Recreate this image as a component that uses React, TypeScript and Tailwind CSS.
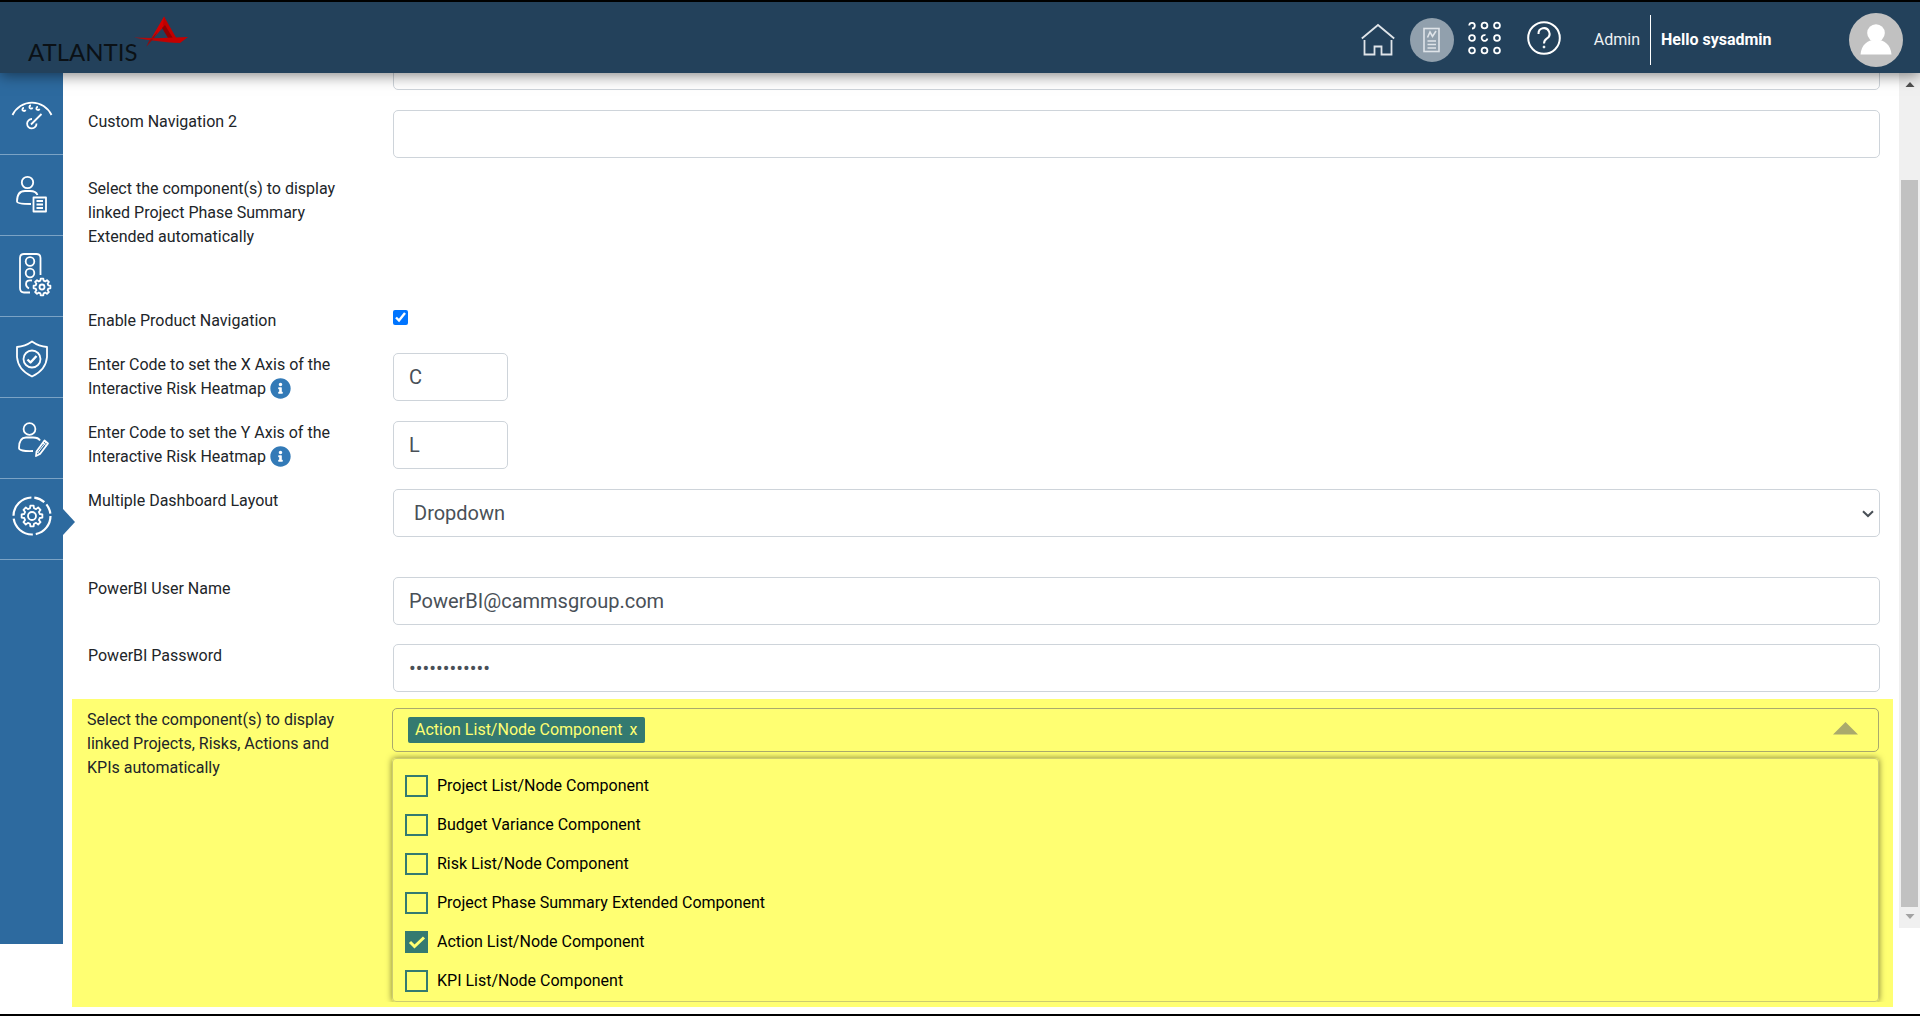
import { useState } from "react";
import type { ReactNode } from "react";
import { FaInfoCircle } from "react-icons/fa";

const COMPONENTS = [
  "Project List/Node Component",
  "Budget Variance Component",
  "Risk List/Node Component",
  "Project Phase Summary Extended Component",
  "Action List/Node Component",
  "KPI List/Node Component",
];

const inputClass =
  "block h-12 rounded-[5px] border border-[#ced4da] bg-white px-[15px] text-xl text-[#495057] focus:outline-none";

// Outline of a cog with the given number of teeth
function gearPath(cx: number, cy: number, outer: number, inner: number, teeth: number) {
  const points: string[] = [];
  const step = (Math.PI * 2) / teeth;
  for (let i = 0; i < teeth; i++) {
    const a = i * step - Math.PI / 2;
    const corners = [
      [inner, -0.32],
      [outer, -0.2],
      [outer, 0.2],
      [inner, 0.32],
    ];
    corners.forEach(([r, offset]) => {
      const angle = a + offset * step;
      points.push(`${(cx + r * Math.cos(angle)).toFixed(2)} ${(cy + r * Math.sin(angle)).toFixed(2)}`);
    });
  }
  return `M${points.join("L")}Z`;
}

function Logo() {
  return (
    <a href="#" className="flex items-start pl-7" aria-label="Atlantis">
      <span className="pt-9 font-[Lato] text-2xl leading-7 text-[#0b1116]">ATLANTIS</span>
      <svg width="56" height="32" viewBox="0 0 56 32" className="mt-3.5 -ml-1">
        <path d="M0 21.5L17 22L40 25.500L46 27L35 26.500L14 24Z" fill="#b30a0a" />
        <path d="M30 0.500L33 7L16 26L12.500 30.500Z" fill="#d40000" />
        <path d="M30 0.500L44 25L46 27L38 24L29 9Z" fill="#c00000" />
        <path d="M31 9L40 24L34 22L28 12Z" fill="#8f0000" />
        <path d="M15 25L24 15L20 22L12.500 30.500Z" fill="#8a0d12" />
        <path d="M15 22.500L54 21L46 27L33 25.500Z" fill="#c40000" />
      </svg>
    </a>
  );
}

function Header() {
  return (
    <header className="relative z-20 flex h-[71px] shrink-0 justify-between bg-[#23415b] pr-[17px] text-base text-white shadow-[0_2px_14px_rgba(0,0,0,0.5)]">
      <Logo />
      <div className="flex items-center pt-1">
        <button type="button" aria-label="Home" className="mr-[15px]">
          <svg width="34" height="34" viewBox="0 0 34 34" fill="none" stroke="#dfe4e9" strokeWidth="1.800">
            <path d="M0.800 15.500L17 2L33.200 15.500" />
            <path d="M3.500 17V31.500H13.500V23.500H20.500V31.500H30.500V17" />
          </svg>
        </button>
        <button
          type="button"
          aria-label="Reports"
          className="mr-3.5 flex size-11 items-center justify-center rounded-full bg-[#91a0ad]"
        >
          <svg width="18" height="26" viewBox="0 0 18 26" fill="none" stroke="#dfe4e9" strokeWidth="1.600">
            <rect x="1" y="1.500" width="15" height="23" />
            <path d="M4.500 10.500L7 5L9.500 9.500L13 4M4.500 14H13M4.500 17.500H13M4.500 21H13" />
          </svg>
        </button>
        <button type="button" aria-label="Products" className="mr-[25px]">
          <svg width="34" height="44" viewBox="0 0 34 44" fill="none" stroke="#fff" strokeWidth="1.800">
            <path d="M1.200 7.500A2.800 2.800 0 1 1 4 10.500" />
            <circle cx="16.500" cy="7.500" r="2.900" />
            <circle cx="29" cy="7.500" r="2.900" />
            <circle cx="4" cy="20" r="2.900" />
            <path d="M17.500 17.200A2.900 2.900 0 1 0 19.400 20.500" />
            <circle cx="29" cy="20" r="2.900" />
            <circle cx="4" cy="32.500" r="2.900" />
            <circle cx="16.500" cy="32.500" r="2.900" />
            <circle cx="29" cy="32.500" r="2.900" />
          </svg>
        </button>
        <button type="button" aria-label="Help" className="mr-[33px]">
          <svg width="34" height="38" viewBox="0 0 34 38" fill="none" stroke="#fff" strokeWidth="2">
            <circle cx="17" cy="17" r="15.800" />
            <path d="M11.500 13A5.500 5.500 0 1 1 20 17.300Q17 19.200 17 22.500" />
            <circle cx="17" cy="26" r="1" fill="#fff" strokeWidth="0.800" />
          </svg>
        </button>
        <a href="#" className="text-[#eef1f4]">Admin</a>
        <div className="mr-2.5 ml-2.5 h-[50px] w-px bg-white" />
        <span className="w-[188px] font-bold">Hello sysadmin</span>
        <button type="button" aria-label="Profile">
          <svg width="54" height="54" viewBox="0 0 54 54">
            <circle cx="27" cy="27" r="27" fill="#c1c1c1" />
            <circle cx="27" cy="20" r="8.800" fill="#fff" />
            <path d="M11.500 41.500C12 32 19 26.500 27 26.500S42 32 42.500 41.500Z" fill="#fff" />
          </svg>
        </button>
      </div>
    </header>
  );
}

const NAV_ITEMS: { label: string; icon: ReactNode }[] = [
  {
    label: "Dashboard",
    icon: (
      <>
        <path d="M12.500 41A21.500 21.500 0 0 1 51.500 41" />
        <path d="M24 33.800A1.600 1.600 0 1 0 25.500 35.800M31 31.500A1.600 1.600 0 1 0 32.500 33.500M38 32.800A1.600 1.600 0 1 0 39.500 34.800" />
        <path d="M32 45A4.700 4.700 0 1 0 36.500 49.500M31 50.500L41.500 40" />
      </>
    ),
  },
  {
    label: "My Reports",
    icon: (
      <>
        <circle cx="27.500" cy="27.500" r="5.700" />
        <path d="M31 49Q17 49 17 46.500Q17 36 25 36H30Q36 36 37.500 40" />
        <rect x="33.500" y="42.500" width="12.500" height="14" />
        <path d="M36.500 46H43M36.500 49.500H43M36.500 53H43" />
      </>
    ),
  },
  {
    label: "Status Settings",
    icon: (
      <>
        <path d="M40.500 39V22Q40.500 18 36.500 18H24Q20 18 20 22V52Q20 56.500 24 56.500H30" />
        <circle cx="30" cy="25.500" r="4.300" />
        <circle cx="30" cy="37" r="4.300" />
        <path d="M32 44.500Q26 43.500 26 48Q26 51 29 52.500" />
        <path d={gearPath(42, 51, 8.5, 6.5, 8)} />
        <circle cx="42" cy="51" r="2.500" />
      </>
    ),
  },
  {
    label: "Risk",
    icon: (
      <>
        <path d="M32 24.500Q25 29.500 17 30V40Q18 53 32 59.500Q46 53 47 40V30Q39 29.500 32 24.500Z" />
        <circle cx="32" cy="42" r="8.500" />
        <path d="M27.500 42.500L30.500 45.500L36.500 39" strokeWidth="2.400" />
      </>
    ),
  },
  {
    label: "Users",
    icon: (
      <>
        <circle cx="29.500" cy="31" r="5.900" />
        <path d="M33 53Q19 53.500 19 50Q19 39.500 26 39.500H33Q38.500 39.500 40 42.500" />
        <path d="M44.500 42.500L48 45.500L40 56L36 58L36.500 53.500Z" />
        <path d="M46 44L38 54.500M43 45L46.500 48M36.500 53.500L40 56" strokeWidth="1" />
      </>
    ),
  },
  {
    label: "Configuration",
    icon: (
      <>
        <circle cx="32" cy="37" r="18.500" strokeWidth="2.200" strokeDasharray="25 3 27 3 28 3 11 3 10 3.200" />
        <path d={gearPath(32, 37, 10.5, 8, 8)} />
        <circle cx="32" cy="37" r="4" />
      </>
    ),
  },
];

function Sidebar() {
  return (
    <nav className="relative z-10 mb-[70px] w-[63px] shrink-0 bg-[#2d6a9f] pt-px">
      {NAV_ITEMS.map((item) => (
        <a
          key={item.label}
          href="#"
          aria-label={item.label}
          className="relative block h-[81px] border-b border-[#7ba3c5]"
        >
          <svg
            width="63"
            height="80"
            viewBox="0 0 63 80"
            fill="none"
            stroke="#fff"
            strokeWidth="1.800"
            strokeLinejoin="round"
          >
            {item.icon}
          </svg>
          {item.label === "Configuration" && (
            <svg width="12" height="26" viewBox="0 0 12 26" className="absolute top-[30px] left-full">
              <path d="M0 0L12 13L0 26Z" fill="#2d6a9f" />
            </svg>
          )}
        </a>
      ))}
    </nav>
  );
}

interface RowProps {
  label: string;
  id?: string;
  info?: boolean;
  className?: string;
  children?: ReactNode;
}

function Row({ label, id, info, className = "pb-5", children }: RowProps) {
  return (
    <div className={`flex items-start ${className}`}>
      <label htmlFor={id} className="w-[305px] shrink-0 pr-11 leading-6">
        {label}
        {info && <FaInfoCircle className="-mt-0.5 ml-1 inline size-[21px] text-[#337ab7]" />}
      </label>
      <div className="min-w-0 flex-1">{children}</div>
    </div>
  );
}

function ComponentPicker() {
  const [selected, setSelected] = useState<string[]>(["Action List/Node Component"]);

  const toggle = (name: string) => {
    setSelected((prev) => (prev.includes(name) ? prev.filter((n) => n !== name) : [...prev, name]));
  };

  return (
    <>
      <div className="flex h-11 items-center justify-between rounded-[5px] border border-[#aaaa6c] pr-5 pl-[15px]">
        <div className="flex gap-2">
          {selected.map((name) => (
            <span
              key={name}
              className="flex h-[26px] items-center gap-[7px] rounded-[2px] bg-[#347a70] px-[7px] text-[#ffff72]"
            >
              {name}
              <button type="button" aria-label={`Remove ${name}`} onClick={() => toggle(name)}>
                x
              </button>
            </span>
          ))}
        </div>
        <button type="button" aria-label="Close list" className="pb-1">
          <svg width="25" height="13" viewBox="0 0 25 13" className="block">
            <path d="M12.500 0L25 12.500H0Z" fill="#aaaa6c" />
          </svg>
        </button>
      </div>

      <div className="mt-1.5 rounded-[4px] border border-[#cccc70] pt-[7px] pb-px pl-3 shadow-[0_0_6px_rgba(0,0,0,0.5)] [clip-path:inset(-8px_-8px_0_-8px)]">
        {COMPONENTS.map((name) => (
          <label key={name} className="flex h-[39px] items-center gap-[9px] text-black">
            <span className="relative">
              <input
                type="checkbox"
                checked={selected.includes(name)}
                onChange={() => toggle(name)}
                className="block h-[22px] w-[23px] appearance-none border-2 border-[#347a70] checked:bg-[#347a70]"
              />
              {selected.includes(name) && (
                <svg width="23" height="22" viewBox="0 0 23 22" className="pointer-events-none absolute inset-0">
                  <path d="M5 11L9.500 15.500L19 6.500" fill="none" stroke="#ffff72" strokeWidth="3" />
                </svg>
              )}
            </span>
            {name}
          </label>
        ))}
      </div>
    </>
  );
}

function Scrollbar() {
  return (
    <div className="mb-[86px] flex w-[21px] shrink-0 flex-col items-center bg-[#f0f0f0] pb-[21px]">
      <svg width="10" height="107" viewBox="0 0 10 107" className="shrink-0">
        <path d="M0.500 14L5 9L9.500 14Z" fill="#505050" />
      </svg>
      <div className="relative w-[17px] flex-1 bg-[#c1c1c1]">
        <svg width="10" height="5" viewBox="0 0 10 5" className="absolute top-full left-1 mt-[7px]">
          <path d="M0.500 0H9.500L5 5Z" fill="#a3a3a3" />
        </svg>
      </div>
    </div>
  );
}

export default function App() {
  const [xAxis, setXAxis] = useState("C");
  const [yAxis, setYAxis] = useState("L");
  const [userName, setUserName] = useState("PowerBI@cammsgroup.com");
  const [password, setPassword] = useState("abcdefghijkl");

  return (
    <div className="flex h-screen flex-col overflow-hidden border-y-2 border-black bg-white font-[Roboto,sans-serif] text-base text-[#212529]">
      <Header />
      <div className="flex min-h-0 flex-1">
        <Sidebar />

        <main className="min-w-0 flex-1 overflow-hidden pr-[19px] pl-[25px]">
          {/* Row scrolled under the header */}
          <div className="-mt-[31px] pb-5 pl-[305px]">
            <input type="text" aria-label="Custom Navigation 1" className={`${inputClass} w-full`} />
          </div>

          <Row label="Custom Navigation 2" id="nav2" className="pb-[19px]">
            <input id="nav2" type="text" className={`${inputClass} w-full`} />
          </Row>
          <Row
            label="Select the component(s) to display linked Project Phase Summary Extended automatically"
            className="pb-[60px]"
          />
          <Row label="Enable Product Navigation" id="productNav">
            <input id="productNav" type="checkbox" defaultChecked className="mt-px block size-[15px]" />
          </Row>
          <Row label="Enter Code to set the X Axis of the Interactive Risk Heatmap" id="xAxis" info>
            <input
              id="xAxis"
              type="text"
              value={xAxis}
              onChange={(e) => setXAxis(e.target.value)}
              className={`${inputClass} w-[115px]`}
            />
          </Row>
          <Row label="Enter Code to set the Y Axis of the Interactive Risk Heatmap" id="yAxis" info>
            <input
              id="yAxis"
              type="text"
              value={yAxis}
              onChange={(e) => setYAxis(e.target.value)}
              className={`${inputClass} w-[115px]`}
            />
          </Row>
          <Row label="Multiple Dashboard Layout" id="layout" className="pb-10">
            <div className="relative">
              <select
                id="layout"
                className="block h-12 w-full appearance-none rounded-[5px] border border-[#ced4da] bg-white px-5 text-xl text-[#495057] focus:outline-none"
              >
                <option>Dropdown</option>
                <option>Tabs</option>
              </select>
              <svg
                width="12"
                height="8"
                viewBox="0 0 12 8"
                className="pointer-events-none absolute top-[21px] right-1.5"
              >
                <path d="M1 1.200L6 6L11 1.200" fill="none" stroke="#495057" strokeWidth="2" />
              </svg>
            </div>
          </Row>
          <Row label="PowerBI User Name" id="userName" className="pb-[19px]">
            <input
              id="userName"
              type="text"
              value={userName}
              onChange={(e) => setUserName(e.target.value)}
              className={`${inputClass} w-full`}
            />
          </Row>
          <Row label="PowerBI Password" id="password" className="pb-[7px]">
            <input
              id="password"
              type="password"
              value={password}
              onChange={(e) => setPassword(e.target.value)}
              className={`${inputClass} w-full`}
            />
          </Row>

          {/* Highlighted setting */}
          <section className="-mr-[13px] -ml-4 bg-[#ffff72] pt-[9px] pr-3.5 pb-[5px] pl-[15px]">
            <Row
              label="Select the component(s) to display linked Projects, Risks, Actions and KPIs automatically"
              className="pb-0"
            >
              <ComponentPicker />
            </Row>
          </section>
        </main>

        <Scrollbar />
      </div>
    </div>
  );
}
